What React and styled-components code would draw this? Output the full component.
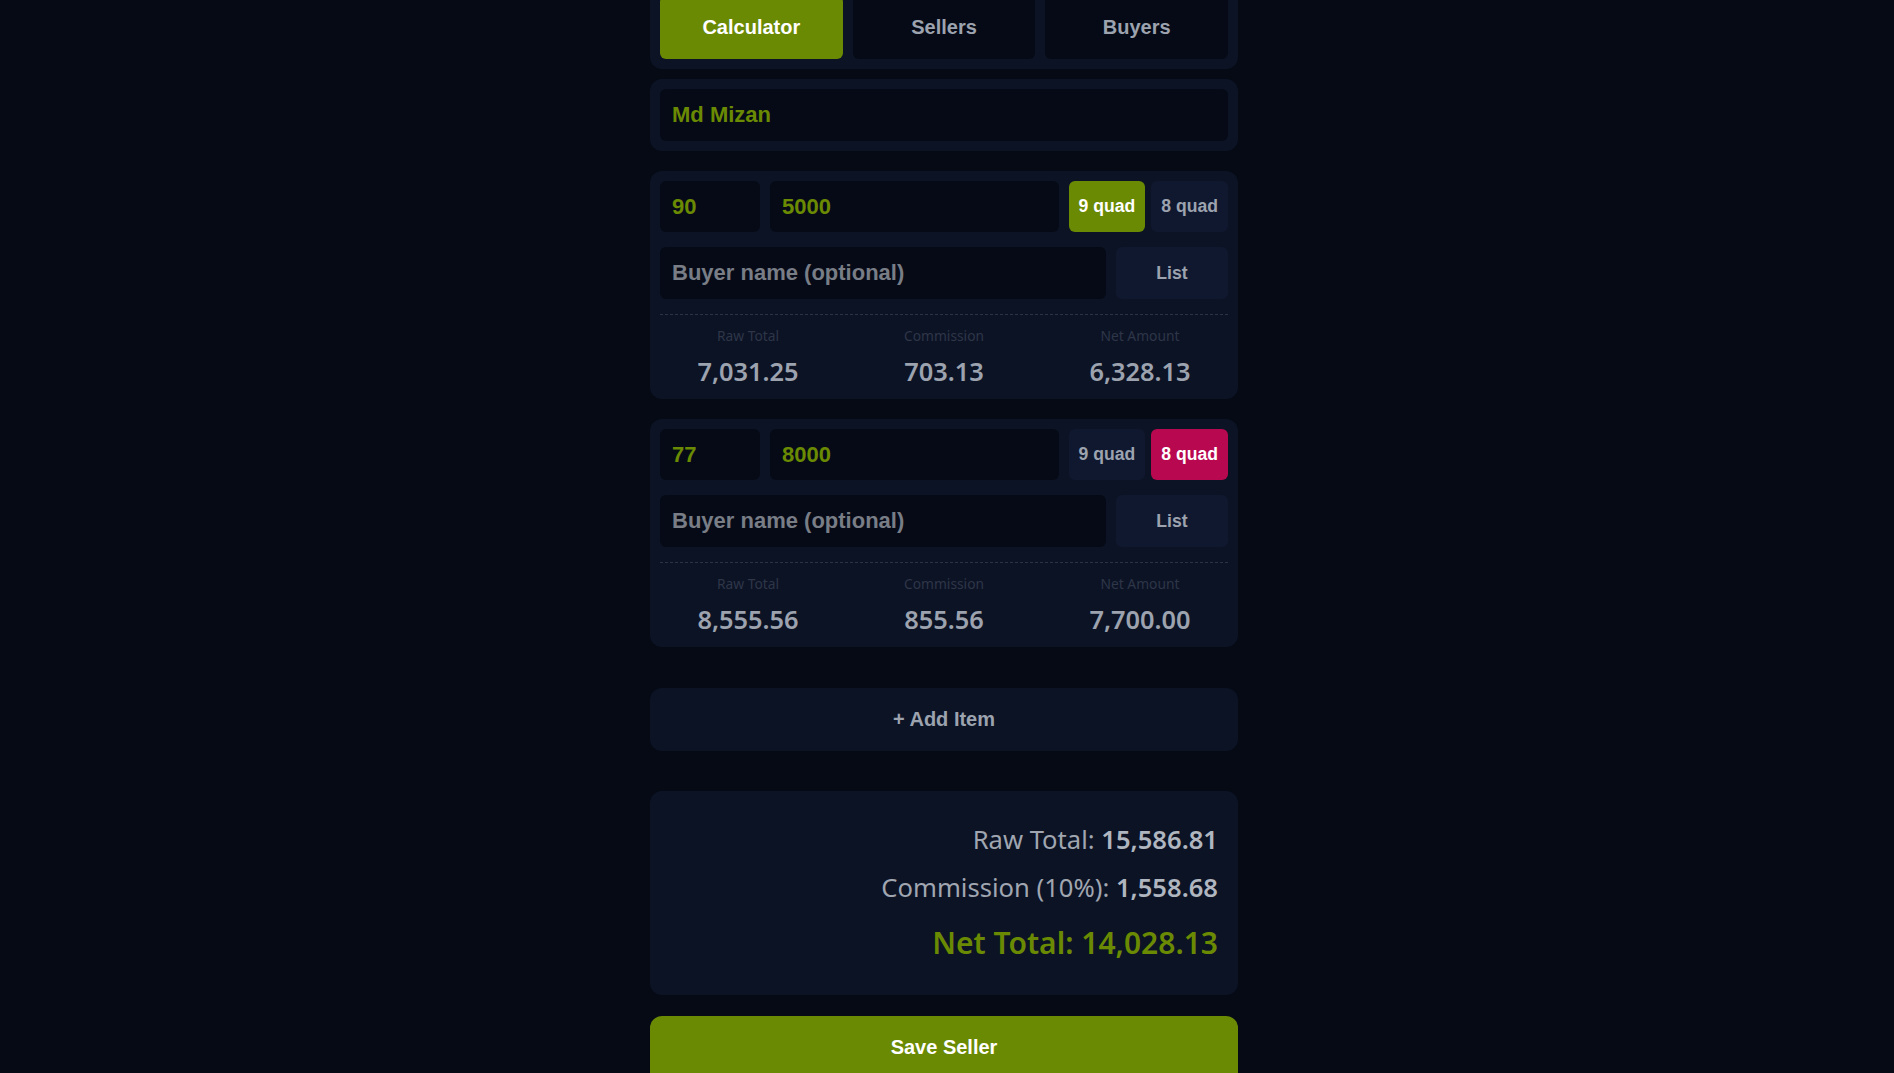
import React from "react";
import styled, { createGlobalStyle } from "styled-components";

const GlobalStyle = createGlobalStyle`
  html, body { margin: 0; padding: 0; background: #050a15; }
  body { font-family: "Liberation Sans", Arial, sans-serif; }
  * { box-sizing: border-box; }
`;

const olive = "#6b8a03";
const card = "#0c1325";
const field = "#060a16";
const navy = "#10182f";
const gray = "#9ca3af";

const Page = styled.main`
  width: 588px;
  margin: -14px 0 0 calc(50% - 297px);
  display: flex;
  flex-direction: column;
`;

const Card = styled.section`
  background: ${card};
  border-radius: 12px;
  padding: 10px;
  margin-bottom: ${(p) => p.$mb ?? 20}px;
`;

const Tabs = styled(Card)`
  display: grid;
  grid-template-columns: repeat(3, 1fr);
  gap: 10px;
`;

const Tab = styled.button`
  border: none;
  border-radius: 6px;
  padding: 20px 10px;
  font: bold 20px/23px "Liberation Sans", Arial, sans-serif;
  background: ${(p) => (p.$active ? olive : field)};
  color: ${(p) => (p.$active ? "#ffffff" : gray)};
`;

const Field = styled.div`
  background: ${field};
  border-radius: 6px;
  padding: 13px 12px;
  font: bold 22px/25.5px "Liberation Sans", Arial, sans-serif;
  color: ${(p) => (p.$placeholder ? "#787d86" : olive)};
  white-space: nowrap;
  overflow: hidden;
  flex: ${(p) => (p.$w ? `0 0 ${p.$w}px` : "1 1 auto")};
  min-width: 0;
`;

const Row = styled.div`
  display: flex;
  gap: 10px;
  margin-bottom: 15px;
`;

const QuadGroup = styled.div`
  display: flex;
  gap: 6px;
`;

const Quad = styled.button`
  border: none;
  border-radius: 6px;
  padding: 0 10px;
  white-space: nowrap;
  font: bold 17.6px/20px "Liberation Sans", Arial, sans-serif;
  background: ${(p) => (p.$tone === "green" ? olive : p.$tone === "red" ? "#b8084f" : navy)};
  color: ${(p) => (p.$tone ? "#ffffff" : gray)};
`;

const ListBtn = styled.button`
  border: none;
  border-radius: 6px;
  flex: 0 0 112px;
  font: bold 17.6px/20px "Liberation Sans", Arial, sans-serif;
  background: ${navy};
  color: ${gray};
`;

const Divider = styled.hr`
  border: none;
  border-top: 1px dashed #2a3346;
  margin: 1px 0 0;
`;

const Stats = styled.div`
  display: grid;
  grid-template-columns: repeat(3, 1fr);
  margin: 0 -10px 1px;
  padding-top: 11px;
`;

const Stat = styled.div`
  display: flex;
  flex-direction: column;
  align-items: center;
  gap: 9px;
  font-family: "Noto Sans", "Open Sans", sans-serif;
`;

const StatLabel = styled.span`
  font-size: 13.8px;
  color: #2e3648;
`;

const StatValue = styled.span`
  font-size: 25.4px;
  font-weight: 600;
  color: ${gray};
`;

const AddButton = styled.button`
  border: none;
  border-radius: 12px;
  background: ${card};
  color: ${gray};
  padding: 20px;
  font: bold 20px/23px "Liberation Sans", Arial, sans-serif;
  margin: 21px 0 40px;
`;

const Summary = styled.section`
  background: ${card};
  border-radius: 12px;
  padding: 30px 20px 28px;
  display: flex;
  flex-direction: column;
  align-items: flex-end;
  gap: 10px;
  font-family: "Noto Sans", "Open Sans", sans-serif;
  margin-bottom: 21px;
`;

const SumLine = styled.div`
  font-size: 25.6px;
  line-height: 38.4px;
  color: #a0a6b0;
  & b { font-weight: 600; color: #b0b6bf; }
`;

const NetLine = styled.div`
  font-size: 30px;
  line-height: 48px;
  font-weight: 600;
  color: ${olive};
  margin-top: 2px;
`;

const SaveButton = styled.button`
  border: none;
  border-radius: 12px 12px 0 0;
  background: ${olive};
  color: #ffffff;
  padding: 20px 20px 30px;
  font: bold 20px/23px "Liberation Sans", Arial, sans-serif;
`;

const items = [
  { qty: "90", price: "5000", quad: 9, raw: "7,031.25", com: "703.13", net: "6,328.13" },
  { qty: "77", price: "8000", quad: 8, raw: "8,555.56", com: "855.56", net: "7,700.00" },
];

function ItemCard({ item }) {
  return (
    <Card>
      <Row>
        <Field $w={100}>{item.qty}</Field>
        <Field>{item.price}</Field>
        <QuadGroup>
          <Quad $tone={item.quad === 9 ? "green" : undefined}>9 quad</Quad>
          <Quad $tone={item.quad === 8 ? "red" : undefined}>8 quad</Quad>
        </QuadGroup>
      </Row>
      <Row>
        <Field $placeholder>Buyer name (optional)</Field>
        <ListBtn>List</ListBtn>
      </Row>
      <Divider />
      <Stats>
        <Stat>
          <StatLabel>Raw Total</StatLabel>
          <StatValue>{item.raw}</StatValue>
        </Stat>
        <Stat>
          <StatLabel>Commission</StatLabel>
          <StatValue>{item.com}</StatValue>
        </Stat>
        <Stat>
          <StatLabel>Net Amount</StatLabel>
          <StatValue>{item.net}</StatValue>
        </Stat>
      </Stats>
    </Card>
  );
}

export default function App() {
  return (
    <>
      <GlobalStyle />
      <Page>
        <Tabs $mb={10}>
          <Tab $active>Calculator</Tab>
          <Tab>Sellers</Tab>
          <Tab>Buyers</Tab>
        </Tabs>
        <Card $mb={20}>
          <Field>Md Mizan</Field>
        </Card>
        {items.map((it, i) => (
          <ItemCard key={i} item={it} />
        ))}
        <AddButton>+ Add Item</AddButton>
        <Summary>
          <SumLine>
            Raw Total: <b>15,586.81</b>
          </SumLine>
          <SumLine>
            Commission (10%): <b>1,558.68</b>
          </SumLine>
          <NetLine>Net Total: 14,028.13</NetLine>
        </Summary>
        <SaveButton>Save Seller</SaveButton>
      </Page>
    </>
  );
}
